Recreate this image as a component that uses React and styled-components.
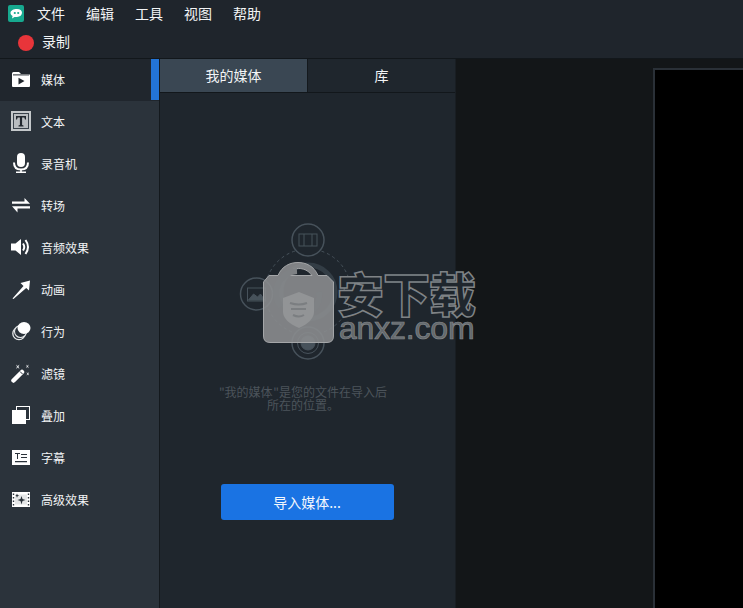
import React from 'react';
import styled, { createGlobalStyle } from 'styled-components';

const GlobalStyle = createGlobalStyle`
  html, body {
    margin: 0;
    padding: 0;
    height: 100%;
    overflow: hidden;
    background: #131618;
  }
  #root {
    height: 100%;
  }
`;

const Page = styled.div`
  position: relative;
  width: 743px;
  height: 608px;
  display: flex;
  flex-direction: column;
  overflow: hidden;
  font-family: "Noto Sans CJK SC", "Liberation Sans", sans-serif;
  color: #f2f4f5;
`;

const TopBar = styled.header`
  height: 58px;
  flex: none;
  background: #1f252c;
  border-bottom: 1px solid #12171b;
`;

const MenuBar = styled.nav`
  height: 26px;
  display: flex;
  align-items: center;
  padding-left: 8px;
`;

const Logo = styled.svg`
  width: 16px;
  height: 17px;
  margin-right: 13px;
`;

const MenuItem = styled.span`
  width: 49px;
  font-size: 14px;
  line-height: 26px;
`;

const RecordRow = styled.div`
  height: 32px;
  box-sizing: border-box;
  padding: 0 0 2px 18px;
  display: flex;
  align-items: center;
  font-size: 14px;
`;

const RecordDot = styled.span`
  width: 16px;
  height: 16px;
  margin: 4px 8px 0 0;
  border-radius: 50%;
  background: #e8353a;
`;

const Main = styled.div`
  flex: 1;
  display: flex;
  min-height: 0;
`;

const Sidebar = styled.aside`
  width: 159px;
  flex: none;
  background: #2b333b;
  border-right: 1px solid #14191d;
`;

const SideItem = styled.div`
  position: relative;
  height: 42px;
  box-sizing: border-box;
  padding: 0 0 2px 11px;
  display: flex;
  align-items: center;
  font-size: 12px;
  background: ${p => (p.$active ? '#20262d' : 'transparent')};
`;

const ActiveMark = styled.span`
  position: absolute;
  top: 0;
  right: 0;
  width: 8px;
  height: 41px;
  background: #2374d6;
`;

const SideIcon = styled.svg`
  width: 20px;
  height: 20px;
  margin-right: 10px;
  flex: none;
`;

const MediaPanel = styled.section`
  width: 296px;
  box-sizing: border-box;
  flex: none;
  display: flex;
  flex-direction: column;
  align-items: center;
  background: #1f262d;
  border-right: 1px solid #191e23;
`;

const Tabs = styled.div`
  width: 100%;
  height: 34px;
  flex: none;
  display: flex;
  border-bottom: 1px solid #12171b;
  box-sizing: border-box;
`;

const Tab = styled.div`
  flex: ${p => (p.$active ? '0 0 148px' : '1')};
  box-sizing: border-box;
  padding-bottom: 2px;
  display: flex;
  align-items: center;
  justify-content: center;
  font-size: 14px;
  background: ${p => (p.$active ? '#3a4753' : 'transparent')};
  border-right: ${p => (p.$active ? '1px solid #14191d' : 'none')};
`;

const Diagram = styled.svg`
  width: 140px;
  height: 140px;
  margin-top: 129px;
  flex: none;
`;

const Hint = styled.p`
  width: 190px;
  margin: 23px 9px 0 0;
  font-size: 12px;
  line-height: 13px;
  text-align: center;
  color: #4c545b;
`;

const ImportButton = styled.button`
  width: 173px;
  height: 36px;
  margin: 73px 1px 0 0;
  border: none;
  border-radius: 3px;
  background: #1a73e3;
  color: #f4f8fd;
  font-family: inherit;
  font-size: 14px;
  padding: 0;
`;

const Stage = styled.main`
  flex: 1;
  background: #131618;
  padding: 9px 0 0 197px;
`;

const Canvas = styled.div`
  height: 100%;
  background: #000;
  border-left: 2px solid #2a3037;
  border-top: 2px solid #2a3037;
  box-sizing: border-box;
`;

// site watermark lying over the panel and the stage
const Watermark = styled.div`
  position: absolute;
  left: 263px;
  top: 262px;
  width: 216px;
  height: 82px;
  pointer-events: none;
`;

const Bag = styled.svg`
  position: absolute;
  left: 0;
  top: 0;
  width: 72px;
  height: 81px;
`;

const MarkCn = styled.div`
  position: absolute;
  left: 74px;
  top: 5px;
  font-size: 47px;
  line-height: 50px;
  font-weight: 900;
  letter-spacing: -1px;
  white-space: nowrap;
  color: #1f262d;
  -webkit-text-stroke: 1.5px #7f8386;
`;

const MarkEn = styled.div`
  position: absolute;
  left: 76px;
  top: 50px;
  font-family: "Liberation Sans", sans-serif;
  font-size: 32px;
  line-height: 33px;
  letter-spacing: -0.2px;
  white-space: nowrap;
  color: #63686c;
  -webkit-text-stroke: 0.7px #85898c;
`;

const icons = {
  media: (
    <>
      <path d="M1 4.500Q1 3 2.500 3H8l2 2h7.500Q19 5 19 6.500V17q0 1-1 1H2q-1 0-1-1z" fill="#fff" />
      <path d="M2 5.900H18" stroke="#20262d" strokeWidth="1" />
      <path d="M7.500 8.700l6 3.400-6 3.400z" fill="#20262d" />
    </>
  ),
  text: (
    <>
      <rect x="0" y="0" width="20" height="20" fill="#c4c8ca" />
      <rect x="2" y="2" width="16" height="16" fill="#3a434b" />
      <rect x="3" y="3" width="14" height="14" fill="#b9bdc0" />
      <path d="M5 5h10v3.500h-1l-.7-2h-2.200v7.500l1.400.5V15.500H7.500v-1l1.400-.5V6.500H6.700L6 8.500H5z" fill="#22282e" />
    </>
  ),
  mic: (
    <>
      <rect x="6" y="0" width="8" height="14" rx="4" fill="#fff" />
      <path d="M3 9.500q0 7 7 7t7-7" fill="none" stroke="#fff" strokeWidth="2" />
      <path d="M10 16v3.500M5 19.300h10" stroke="#fff" strokeWidth="1.600" />
    </>
  ),
  swap: (
    <>
      <path d="M1 6.500H13.500V3L19 8.800H1z" fill="#fff" />
      <path d="M19 11.200H1L6.500 17.500V13.500H19z" fill="#fff" />
    </>
  ),
  audio: (
    <>
      <path d="M0 6.500h4.500L10 2v16l-5.500-4.500H0z" fill="#fff" />
      <path d="M12 6.500q2.500 3.500 0 7" fill="none" stroke="#fff" strokeWidth="2" />
      <path d="M14.500 3q5 7 0 14" fill="none" stroke="#fff" strokeWidth="2" />
    </>
  ),
  arrow: (
    <path d="M1.500 19.500L12.500 7 9.500 4 19 1.500 18 11.500 15.200 9 2.500 20z" fill="#fff" />
  ),
  behavior: (
    <>
      <circle cx="8" cy="12.500" r="6.200" fill="none" stroke="#e6e8e9" strokeWidth="1.300" />
      <circle cx="9.500" cy="10.500" r="6" fill="#2b333b" stroke="#e6e8e9" strokeWidth="1.100" />
      <ellipse cx="13" cy="7" rx="6.500" ry="6" fill="#fff" />
    </>
  ),
  wand: (
    <>
      <path d="M2.500 17.500L11 9" stroke="#fff" strokeWidth="4.500" strokeLinecap="round" />
      <path d="M9 8.500l2.500 2.500" stroke="#2b333b" strokeWidth="1" />
      <path d="M5 1.500l1.700 1.500L8.500 1.500l-1 2.300 1 2.200L6.700 4.500 5 6l1-2.200zM15 1.500l1.300 1.200L17.800 1.500l-.8 1.800.8 2-1.500-1.200L15 5.300l.8-2zM15.500 9l1.300 1.200L18 9l-.6 1.800.6 1.800-1.200-1.200-1.300 1.200.7-1.800z" fill="#dfe2e4" />
    </>
  ),
  overlay: (
    <>
      <rect x="5.500" y="1.500" width="13" height="13" fill="none" stroke="#fff" strokeWidth="1" />
      <rect x="1" y="5" width="14" height="14" fill="#fff" />
    </>
  ),
  caption: (
    <>
      <rect x="1" y="3" width="18" height="15" fill="#fff" />
      <path d="M4 6h5v1H7v5H6V7H4zM10 7h6v1h-6zM10 10h6v1h-6zM4 14h12v1.200H4z" fill="#2b333b" />
    </>
  ),
  fx: (
    <>
      <rect x="1" y="3" width="18" height="15" fill="#fff" />
      <path d="M4 5.500h12v10H4z" fill="#e4e6e7" />
      <path d="M1.800 4.500h1.400v1.500H1.800zM1.800 8h1.400v1.500H1.800zM1.800 11.500h1.400V13H1.800zM1.800 15h1.400v1.500H1.800zM16.800 4.500h1.400v1.500h-1.400zM16.800 8h1.400v1.500h-1.400zM16.800 11.500h1.400V13h-1.400zM16.800 15h1.400v1.500h-1.400z" fill="#2b333b" />
      <path d="M10.500 7l1 3 3 1-3 1-1 3.500-1-3.500-3-1 3-1z" fill="#2b333b" />
      <path d="M6 4.500l.6 1.500 1.500.6-1.500.6L6 8.700l-.6-1.500-1-.6 1-.6z" fill="#2b333b" />
    </>
  ),
};

const sideItems = [
  { key: 'media', label: '媒体' },
  { key: 'text', label: '文本' },
  { key: 'mic', label: '录音机' },
  { key: 'swap', label: '转场' },
  { key: 'audio', label: '音频效果' },
  { key: 'arrow', label: '动画' },
  { key: 'behavior', label: '行为' },
  { key: 'wand', label: '滤镜' },
  { key: 'overlay', label: '叠加' },
  { key: 'caption', label: '字幕' },
  { key: 'fx', label: '高级效果' },
];

const menus = ['文件', '编辑', '工具', '视图', '帮助'];

const App = () => (
  <Page>
    <GlobalStyle />
    <TopBar>
      <MenuBar>
        <Logo viewBox="0 0 16 17">
          <rect width="16" height="17" rx="2" fill="#17a98f" />
          <path d="M9 4c3 0 5 1.600 5 3.800S12 12 9 12H6.500L4 13.500l.6-2.500C3 10.200 2.500 9 2.500 7.800 2.500 5.600 5.500 4 9 4z" fill="#fff" />
          <circle cx="6.800" cy="8" r="1.100" fill="#17a98f" />
          <circle cx="10.200" cy="8" r="1.100" fill="#17a98f" />
        </Logo>
        {menus.map(m => <MenuItem key={m}>{m}</MenuItem>)}
      </MenuBar>
      <RecordRow>
        <RecordDot />
        录制
      </RecordRow>
    </TopBar>
    <Main>
      <Sidebar>
        {sideItems.map((item, i) => (
          <SideItem key={item.key} $active={i === 0}>
            <SideIcon viewBox="0 0 20 20">{icons[item.key]}</SideIcon>
            {item.label}
            {i === 0 && <ActiveMark />}
          </SideItem>
        ))}
      </Sidebar>
      <MediaPanel>
        <Tabs>
          <Tab $active>我的媒体</Tab>
          <Tab>库</Tab>
        </Tabs>
        <Diagram viewBox="0 0 140 140">
          <g fill="none" stroke="#47525b">
            <circle cx="70" cy="70" r="43" strokeDasharray="3 3" />
            <circle cx="70" cy="70" r="27" strokeWidth="5" stroke="#333d45" />
            <g fill="#1f262d" strokeWidth="1.500">
              <circle cx="70" cy="18" r="16" />
              <circle cx="18.500" cy="72" r="16" />
              <circle cx="122" cy="70" r="16" />
              <circle cx="70" cy="121" r="16" />
            </g>
            <rect x="61" y="12" width="18" height="12" />
            <path d="M66 12v12M74 12v12" />
            <rect x="9.500" y="66" width="18" height="13" />
            <path d="M10.500 78l5-6 4 3 3-3 4 6z" fill="#47525b" />
            <circle cx="70" cy="121" r="10.500" />
            <circle cx="70" cy="121" r="7" fill="#47525b" />
          </g>
        </Diagram>
        <Hint>"我的媒体&#8202;"是您的文件在导入后<br />所在的位置。</Hint>
        <ImportButton>导入媒体...</ImportButton>
      </MediaPanel>
      <Stage>
        <Canvas />
      </Stage>
    </Main>
    <Watermark>
      <Bag viewBox="0 0 72 81">
        <path
          fillRule="evenodd"
          d="M6 13.500H15C19 4 27 .5 35 .5s16 3.500 20 13h9L70.500 20V74q0 6.500-6.500 6.500H7Q.5 80.500.5 74V20zM22 13.500H49C45 8 40 6.500 35.500 6.500S26 8 22 13.500z"
          fill="#8a8c8e"
          fillOpacity="0.9"
          stroke="#a4a6a8"
        />
        <path d="M18 45A22 22 0 0 1 34 9" fill="none" stroke="#7f8285" strokeWidth="6" />
        <path d="M56 30A22 22 0 0 1 50 48" fill="none" stroke="#7f8285" strokeWidth="6" />
        <path d="M20 36l16-6 15 6v14q0 9-15 16-16-7-16-16z" fill="#929496" />
        <path d="M27 41q9 3 17 0M28 47h15M30 53q6 3 11 0" fill="none" stroke="#7b7e81" strokeWidth="2" />
      </Bag>
      <MarkCn>安下载</MarkCn>
      <MarkEn>anxz.com</MarkEn>
    </Watermark>
  </Page>
);

export default App;
